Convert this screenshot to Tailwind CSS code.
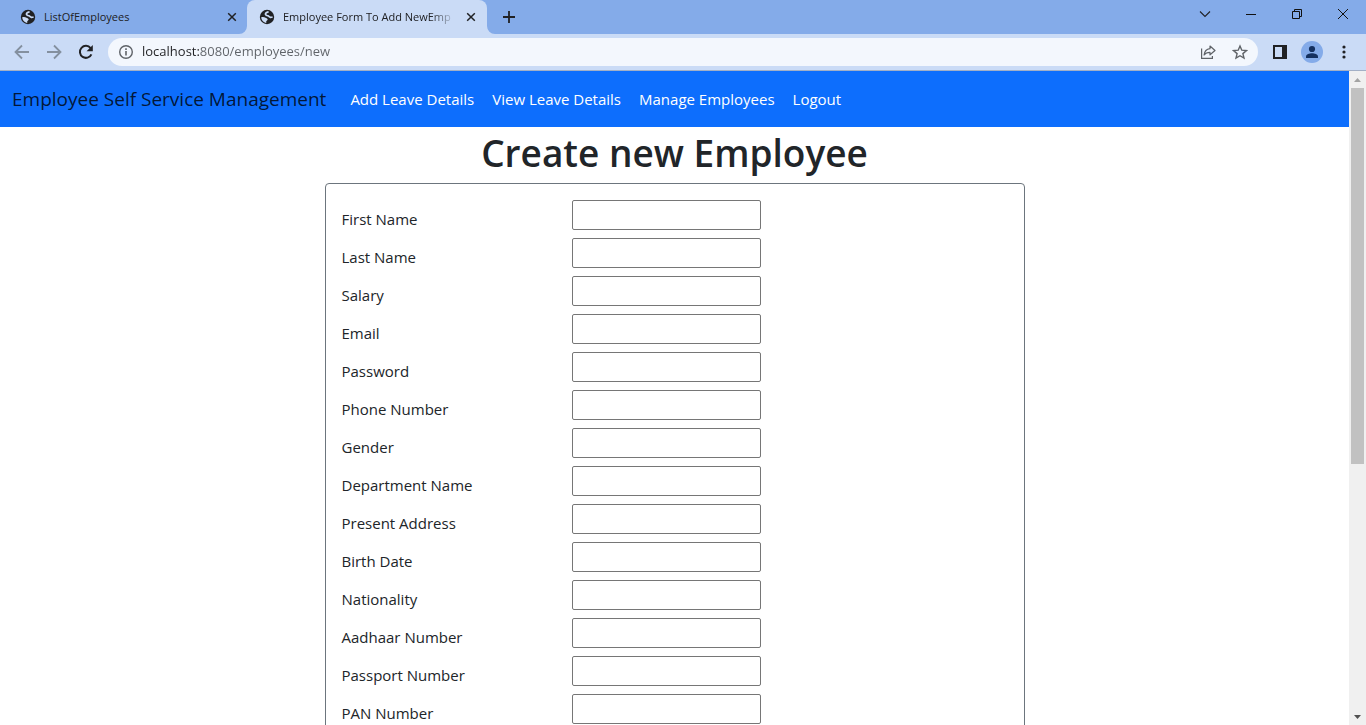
<!DOCTYPE html>
<html lang="en">
<head>
<meta charset="utf-8">
<meta name="viewport" content="width=device-width, initial-scale=1">
<title>Employee Form To Add NewEmployee</title>
<script src="https://cdn.jsdelivr.net/npm/@tailwindcss/browser@4"></script>
</head>
<body class="flex h-screen flex-col overflow-hidden bg-white font-['Open_Sans','Noto_Sans',sans-serif] text-[#212529]">

<svg class="hidden" aria-hidden="true">
  <symbol id="globe" viewBox="0 0 16 16">
    <circle cx="8" cy="8" r="7.2" fill="#202124"/>
    <path d="M9.600 2.600C8.600 3.300 6.800 3.400 6.500 4.800c-.3 1.500 1.200 1.700 2.300 2 1.200.3 1.500 1.300 2.600 1.500.8.100 1.500-.1 2.200-.3" fill="none" stroke="#cadbf6" stroke-width="1.700"/>
    <path d="M2.200 8.300c1.500-.3 3-.3 4.300.4.900.5 2.300.7 2.200 1.900-.1 1-1.200 1.100-1.500 2-.1.400 0 .9.200 1.300C4.500 13.600 2.300 11.200 2.200 8.300z" fill="#cadbf6"/>
  </symbol>
  <symbol id="cross" viewBox="0 0 10 10"><path d="M1.200 1.200l7.600 7.600M8.800 1.200L1.200 8.800" stroke="#202124" stroke-width="1.500" fill="none"/></symbol>
</svg>

<header class="shrink-0">
  <div class="flex h-[34px] items-stretch justify-between bg-[#84abe9]">
    <div class="flex" role="tablist">
      <div class="flex w-[247px] items-center pr-2.5 pl-5">
        <button role="tab" aria-selected="false" class="flex min-w-0 flex-1 items-center gap-2 text-left text-[11px] leading-4 text-[#202124]">
          <svg class="size-4 shrink-0"><use href="#globe"/></svg>
          <span>ListOfEmployees</span>
        </button>
        <button aria-label="Close ListOfEmployees" class="flex size-[10px] items-center"><svg class="size-[10px]"><use href="#cross"/></svg></button>
      </div>
      <div class="relative flex w-60 items-center rounded-t-lg bg-[#cadbf6] pr-[11px] pl-3">
        <svg class="absolute bottom-0 -left-2 size-2" viewBox="0 0 8 8"><path d="M8 0v8H0a8 8 0 0 0 8-8z" fill="#cadbf6"/></svg>
        <svg class="absolute -right-2 bottom-0 size-2" viewBox="0 0 8 8"><path d="M0 0v8h8a8 8 0 0 1-8-8z" fill="#cadbf6"/></svg>
        <button role="tab" aria-selected="true" class="flex min-w-0 flex-1 items-center gap-2 text-left text-[11px] leading-4 text-[#202124]">
          <svg class="size-4 shrink-0"><use href="#globe"/></svg>
          <span class="mr-2.5 flex-1 mask-r-from-85% whitespace-nowrap">Employee Form To Add NewEmp</span>
        </button>
        <button aria-label="Close tab" class="flex size-[10px] items-center"><svg class="size-[10px]"><use href="#cross"/></svg></button>
      </div>
      <button aria-label="New tab" class="ml-4 flex items-center"><svg class="size-3" viewBox="0 0 12 12"><path d="M6 0v12M0 6h12" stroke="#202124" stroke-width="1.800"/></svg></button>
    </div>
    <div class="flex h-7 items-center">
      <button aria-label="Search tabs" class="flex h-full w-[46px] items-center justify-center"><svg class="size-3" viewBox="0 0 12 12"><path d="M1 3.500l5 5 5-5" fill="none" stroke="#202124" stroke-width="1.100"/></svg></button>
      <button aria-label="Minimize" class="flex h-full w-[46px] items-center justify-center"><svg class="size-[10px]" viewBox="0 0 10 10"><path d="M0 5.500h10" stroke="#111"/></svg></button>
      <button aria-label="Restore" class="flex h-full w-[46px] items-center justify-center"><svg class="size-[10px]" viewBox="0 0 10 10"><path d="M.5 2.500h7v7h-7zM2.500 2.500v-2h7v7h-2" fill="none" stroke="#111"/></svg></button>
      <button aria-label="Close" class="flex h-full w-[46px] items-center justify-center"><svg class="size-[10px]" viewBox="0 0 10 10"><path d="M0 0l10 10M10 0L0 10" stroke="#111"/></svg></button>
    </div>
  </div>

  <div class="flex h-[37px] items-center border-b border-[#a3b0c6] bg-[#cadbf6] px-3.5">
    <div class="flex items-center gap-4">
      <button aria-label="Back" class="flex"><svg class="size-4" viewBox="0 0 16 16"><path d="M15 8H2M8 1.500L1.500 8 8 14.500" fill="none" stroke="#84909f" stroke-width="1.800"/></svg></button>
      <button aria-label="Forward" class="flex"><svg class="size-4" viewBox="0 0 16 16"><path d="M1 8h13M8 1.500L14.500 8 8 14.500" fill="none" stroke="#84909f" stroke-width="1.800"/></svg></button>
      <button aria-label="Reload" class="flex"><svg class="size-4" viewBox="0 0 16 16"><path d="M13.400 10.300A6 6 0 1 1 12.600 4.100" fill="none" stroke="#202124" stroke-width="2"/><path d="M14.800 1v6.200H8.600z" fill="#202124"/></svg></button>
    </div>
    <div class="ml-3.5 flex h-7 flex-1 items-center rounded-full bg-[#f3f7fd] px-2.5">
      <button aria-label="Site information" class="flex"><svg class="size-4" viewBox="0 0 16 16"><circle cx="8" cy="8" r="6.300" fill="none" stroke="#5f6368" stroke-width="1.400"/><path d="M8 7v4.500M8 4.300v1.600" stroke="#5f6368" stroke-width="1.600"/></svg></button>
      <input aria-label="Address" type="text" value="localhost:8080/employees/new" class="ml-2 min-w-0 flex-1 bg-[linear-gradient(90deg,#202124_57px,#5f6368_57px)] bg-clip-text text-[13px] text-transparent outline-none">
      <div class="flex items-center gap-4">
        <button aria-label="Share" class="flex"><svg class="size-4" viewBox="0 0 16 16" fill="none" stroke="#5f6368" stroke-width="1.200"><path d="M1.600 4.500v9.900h10.800v-2.400"/><path d="M10 2l5 4.500-5 4.300V8.400c-2.700 0-4.500.7-5.900 2.600.4-3.400 2.300-5.800 5.900-6.300z" stroke-linejoin="round"/></svg></button>
        <button aria-label="Bookmark" class="flex"><svg class="size-4" viewBox="0 0 16 16"><path d="M8 2l1.800 4.200 4.600.4-3.500 3 1.100 4.500L8 11.700l-4 2.400 1.100-4.500-3.500-3 4.600-.4z" fill="none" stroke="#5f6368" stroke-width="1.400"/></svg></button>
      </div>
    </div>
    <div class="ml-3.5 flex items-center gap-[13px]">
      <button aria-label="Side panel" class="flex"><svg class="size-4" viewBox="0 0 16 16"><path d="M1 1h14v14H1zM3 3v10h7V3z" fill="#202124" fill-rule="evenodd"/></svg></button>
      <button aria-label="Profile" class="flex"><svg class="size-[22px]" viewBox="0 0 22 22"><circle cx="11" cy="11" r="11" fill="#84abe9"/><circle cx="11" cy="8" r="3.100" fill="#14305f"/><path d="M5 17v-1.500C5 13.400 8.500 12.300 11 12.300s6 1.100 6 3.200V17z" fill="#14305f"/></svg></button>
      <button aria-label="Menu" class="flex w-4 justify-center"><svg class="h-4 w-1" viewBox="0 0 4 16" fill="#202124"><circle cx="2" cy="3" r="1.600"/><circle cx="2" cy="8" r="1.600"/><circle cx="2" cy="13" r="1.600"/></svg></button>
    </div>
  </div>
</header>

<div class="flex min-h-0 flex-1">
  <main class="min-w-0 flex-1 overflow-hidden">
    <nav class="flex h-14 items-center bg-[#0d6efd] px-3">
      <a href="#" class="mr-4 text-[19px] text-black/80">Employee Self Service Management</a>
      <ul class="flex gap-0.5 text-[15px] text-white">
        <li><a href="#" class="px-2">Add Leave Details</a></li>
        <li><a href="#" class="px-2">View Leave Details</a></li>
        <li><a href="#" class="px-2">Manage Employees</a></li>
        <li><a href="#" class="px-2">Logout</a></li>
      </ul>
    </nav>
    <h1 class="mb-1.5 pt-0.5 text-center text-[37px] leading-12 font-semibold">Create new Employee</h1>
    <form id="employee" class="mx-auto flex max-w-[700px] flex-col gap-2 rounded border border-[#6c757d] p-4 text-[15px] leading-6">
      <div class="flex h-[30px]"><label for="f1" class="w-[230px] pt-[7px]">First Name</label><input id="f1" type="text" class="w-[189px] rounded-xs border border-[#767676]"></div>
      <div class="flex h-[30px]"><label for="f2" class="w-[230px] pt-[7px]">Last Name</label><input id="f2" type="text" class="w-[189px] rounded-xs border border-[#767676]"></div>
      <div class="flex h-[30px]"><label for="f3" class="w-[230px] pt-[7px]">Salary</label><input id="f3" type="text" class="w-[189px] rounded-xs border border-[#767676]"></div>
      <div class="flex h-[30px]"><label for="f4" class="w-[230px] pt-[7px]">Email</label><input id="f4" type="text" class="w-[189px] rounded-xs border border-[#767676]"></div>
      <div class="flex h-[30px]"><label for="f5" class="w-[230px] pt-[7px]">Password</label><input id="f5" type="password" class="w-[189px] rounded-xs border border-[#767676]"></div>
      <div class="flex h-[30px]"><label for="f6" class="w-[230px] pt-[7px]">Phone Number</label><input id="f6" type="text" class="w-[189px] rounded-xs border border-[#767676]"></div>
      <div class="flex h-[30px]"><label for="f7" class="w-[230px] pt-[7px]">Gender</label><input id="f7" type="text" class="w-[189px] rounded-xs border border-[#767676]"></div>
      <div class="flex h-[30px]"><label for="f8" class="w-[230px] pt-[7px]">Department Name</label><input id="f8" type="text" class="w-[189px] rounded-xs border border-[#767676]"></div>
      <div class="flex h-[30px]"><label for="f9" class="w-[230px] pt-[7px]">Present Address</label><input id="f9" type="text" class="w-[189px] rounded-xs border border-[#767676]"></div>
      <div class="flex h-[30px]"><label for="f10" class="w-[230px] pt-[7px]">Birth Date</label><input id="f10" type="text" class="w-[189px] rounded-xs border border-[#767676]"></div>
      <div class="flex h-[30px]"><label for="f11" class="w-[230px] pt-[7px]">Nationality</label><input id="f11" type="text" class="w-[189px] rounded-xs border border-[#767676]"></div>
      <div class="flex h-[30px]"><label for="f12" class="w-[230px] pt-[7px]">Aadhaar Number</label><input id="f12" type="text" class="w-[189px] rounded-xs border border-[#767676]"></div>
      <div class="flex h-[30px]"><label for="f13" class="w-[230px] pt-[7px]">Passport Number</label><input id="f13" type="text" class="w-[189px] rounded-xs border border-[#767676]"></div>
      <div class="flex h-[30px]"><label for="f14" class="w-[230px] pt-[7px]">PAN Number</label><input id="f14" type="text" class="w-[189px] rounded-xs border border-[#767676]"></div>
    </form>
  </main>
  <div class="flex w-[17px] shrink-0 flex-col items-center bg-[#f0f0f0]" aria-hidden="true">
    <div class="flex h-[17px] shrink-0 items-center"><svg class="h-1 w-[7px]" viewBox="0 0 7 4"><path d="M0 4l3.500-4L7 4z" fill="#a3a3a3"/></svg></div>
    <div class="flex w-full flex-1 justify-center"><div class="h-[376px] w-[13px] bg-[#c1c1c1]"></div></div>
    <div class="flex h-[17px] shrink-0 items-center"><svg class="h-1 w-[7px]" viewBox="0 0 7 4"><path d="M0 0l3.500 4L7 0z" fill="#505050"/></svg></div>
  </div>
</div>
</body>
</html>
